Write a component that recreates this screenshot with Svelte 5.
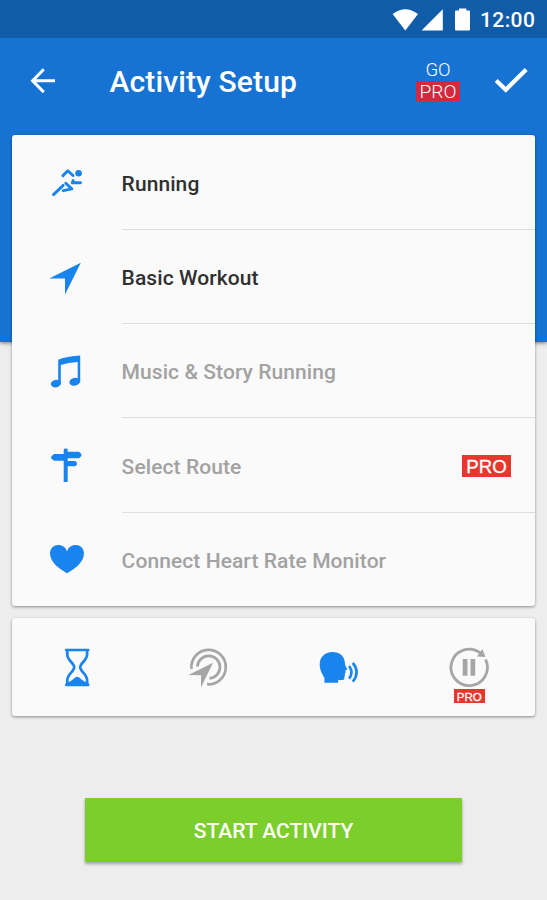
<script>
  const rows = [
    { icon: 'run', label: 'Running', on: true },
    { icon: 'nav', label: 'Basic Workout', on: true },
    { icon: 'music', label: 'Music & Story Running' },
    { icon: 'route', label: 'Select Route', pro: true },
    { icon: 'heart', label: 'Connect Heart Rate Monitor' }
  ];
</script>

<div class="screen">
  <header>
    <div class="status">
      <svg width="80" height="24" viewBox="392 8 80 24" fill="#fff">
        <path d="M392.6 14Q405.3 4.4 418 14L405.3 30.4Z" />
        <path d="M442.8 9.2V30.4H421.6Z" />
        <path d="M456 10.5H459V8.6H466.3V10.5H469Q470 10.5 470 11.5V29.4Q470 30.4 469 30.4H456Q455 30.4 455 29.4V11.5Q455 10.5 456 10.5Z" />
      </svg>
      <span class="time">12:00</span>
    </div>
    <div class="bar">
      <svg class="back" width="26" height="26" viewBox="0 0 26 26" fill="none" stroke="#fff" stroke-width="3">
        <path d="M13.8 1.3L2.6 12.7L13.8 24.1M2.6 12.7H25" />
      </svg>
      <h1>Activity Setup</h1>
      <div class="gopro"><span class="go">GO</span><span class="gp">PRO</span></div>
      <svg width="36" height="28" viewBox="493 66.6 36 28" fill="none" stroke="#fff" stroke-width="4.2">
        <path d="M496.2 80.1L505.8 89.3L526.2 69.2" />
      </svg>
    </div>
  </header>

  <main>
    <section class="card list">
      {#each rows as row}
        <div class="row">
          <div class="lead">
            {#if row.icon === 'run'}
              <svg width="40" height="40" viewBox="46 163 40 40" fill="none" stroke="#1a84ee" stroke-width="2.9" stroke-linecap="round" stroke-linejoin="round">
                <circle cx="78.6" cy="173.2" r="3.3" fill="#1a84ee" stroke="none" />
                <path d="M62.9 175.6L67.8 170.7L73 175.5M73.2 180.6L72.3 182.8H80.5M53.5 194.6L63.2 185.4M65.8 183.2L71.8 188.9L63.3 190.7" />
              </svg>
            {:else if row.icon === 'nav'}
              <svg width="40" height="40" viewBox="46 257.3 40 40" fill="#1a84ee">
                <path d="M80.8 263L65 294.8V278.7H49.2Z" />
              </svg>
            {:else if row.icon === 'music'}
              <svg width="40" height="40" viewBox="46 351.6 40 40" fill="#1a84ee">
                <path d="M58.2 359.3Q67 356 80.2 355.2V382H77.7V361.7Q68 362 60.8 364.6V384H58.2Z" />
                <ellipse cx="55.9" cy="383.2" rx="5.1" ry="3.8" transform="rotate(-14 55.9 383.2)" />
                <ellipse cx="74.7" cy="381.4" rx="5.4" ry="3.9" transform="rotate(-14 74.7 381.4)" />
              </svg>
            {:else if row.icon === 'route'}
              <svg width="40" height="40" viewBox="46 445.9 40 40" fill="#1a84ee">
                <path d="M63.7 482V460.7H54L51.2 458.4V456.4L54 454H63.7V449.5Q63.7 448.3 65.7 448.3T67.7 449.5V451.6H79L81.4 454V455.8L79 458.2H67.7V461H75.4L77 462.8V464.4L75.4 466.2H67.7V482Z" />
              </svg>
            {:else}
              <svg width="40" height="40" viewBox="46 540.2 40 40" fill="#1a84ee">
                <path d="M67 573.4C61 570.5 50 563 50 553.8C50 548.5 53.8 545.2 58.3 545.2C62.5 545.2 65.8 547.5 67 551.8C68.2 547.5 71.5 545.2 75.7 545.2C80.2 545.2 84 548.5 84 553.8C84 563 73 570.5 67 573.4Z" />
              </svg>
            {/if}
          </div>
          <div class="body" class:on={row.on}>
            <span class="label">{row.label}</span>
            {#if row.pro}<span class="pro">PRO</span>{/if}
          </div>
        </div>
      {/each}
    </section>

    <section class="card tools">
      <div class="tool">
        <svg width="48" height="60" viewBox="53 646 48 60" fill="none" stroke="#1a84ee" stroke-width="2.7">
          <path stroke-linecap="round" d="M66.2 650H88.2M66.2 684.8H88.2" />
          <path d="M67.3 650V654.5C67.3 660.5 74.2 663 74.2 667.3S67.3 674 67.3 680V685M87.1 650V654.5C87.1 660.5 80.2 663 80.2 667.3S87.1 674 87.1 680V685" />
          <path fill="#1a84ee" stroke="none" d="M68 685V682.6Q72 681 75.2 677.6Q77.2 676 79.2 677.6Q82.4 681 86.4 682.6V685Z" />
        </svg>
      </div>
      <div class="tool">
        <svg width="48" height="60" viewBox="183.8 646 48 60" fill="none" stroke="#a6a6a6" stroke-width="2.7">
          <path d="M191.3 669A17.2 17.2 0 1 1 206.8 684.2" />
          <path d="M197.2 666.6A11.3 11.3 0 1 1 209.3 678.4" />
          <path fill="#a6a6a6" stroke="none" d="M212.8 662.8L200.8 687.4V675.2L188.2 675Z" />
        </svg>
      </div>
      <div class="tool">
        <svg width="48" height="60" viewBox="314.6 646 48 60" fill="#1a84ee">
          <path d="M324 682.7V678C322 674 319.3 670.5 319.3 664.5C319.3 657 324.5 652.1 332 652.1C339.5 652.1 344.4 656.5 344.6 663.5C344.3 665.5 346.8 668 346.9 669.5L344.9 670.6L345.3 672.4L344.3 673.4L344.8 675L344 675.9C344.5 679.5 343 680.2 340.5 680L337.7 680.2V682.7Z" />
          <g fill="none" stroke="#1a84ee" stroke-width="2.6">
            <path d="M348.7 666Q353.6 672.2 348.7 678.6M352.4 662.9Q360 672.2 352.4 681.7" />
          </g>
        </svg>
      </div>
      <div class="tool">
        <svg width="48" height="60" viewBox="445.3 646 48 60" fill="#a6a6a6">
          <path fill="none" stroke="#a6a6a6" stroke-width="2.8" d="M485.8 659.3A18.2 18.2 0 1 1 480.5 652.9" />
          <path d="M482.7 648.9L485.8 657.1L477.2 656.4ZM463 659H467.8V675.8H463ZM470.8 659H475.5V675.8H470.8Z" />
        </svg>
        <span class="mini">PRO</span>
      </div>
    </section>

    <button>START ACTIVITY</button>
  </main>
</div>

<style>
  .screen {
    height: 900px;
    overflow: hidden;
    background: #ededed;
    font-family: Roboto, sans-serif;
  }
  header {
    height: 342px;
    background: #1673d3;
    box-shadow: 0 1px 4px rgba(0, 0, 0, 0.5);
  }
  .status {
    height: 38px;
    background: #115ca8;
    display: flex;
    align-items: center;
    justify-content: flex-end;
    gap: 8px;
    padding: 2px 11px 0 0;
    box-sizing: border-box;
    color: #fff;
  }
  .time {
    width: 56px;
    font-size: 21px;
    font-weight: 500;
    letter-spacing: 0.4px;
    white-space: nowrap;
  }
  .bar {
    height: 86px;
    display: flex;
    align-items: center;
    padding: 0 18px 0 30px;
  }
  h1 {
    flex: 1;
    margin: 2px 0 0 53.5px;
    font-size: 30px;
    line-height: 36px;
    font-weight: 500;
    letter-spacing: 0.13px;
    color: #fff;
    white-space: nowrap;
  }
  .gopro {
    display: flex;
    flex-direction: column;
    align-items: center;
    width: 44px;
    margin: 0 33px 2px 0;
    color: #fff;
    font-weight: 300;
  }
  .go {
    font-size: 18.5px;
    line-height: 21px;
    padding-top: 1px;
  }
  .gp {
    width: 44px;
    font-size: 19.2px;
    line-height: 21px;
    height: 20px;
    text-align: center;
    background: #d32840;
  }
  main {
    position: relative;
    margin-top: -207px;
    padding: 0 12px;
    display: flex;
    flex-direction: column;
  }
  .card {
    background: #fafafa;
    border-radius: 3px;
    box-shadow: 0 1px 3px rgba(0, 0, 0, 0.42);
  }
  .list {
    height: 471px;
    padding-top: 0.6px;
    box-sizing: border-box;
    display: flex;
    flex-direction: column;
  }
  .row {
    flex: none;
    height: 94.3px;
    display: flex;
  }
  .lead {
    width: 109.6px;
    padding: 27.4px 0 0 34px;
    box-sizing: border-box;
  }
  .body {
    flex: 1;
    display: flex;
    align-items: center;
    justify-content: space-between;
    padding-right: 24px;
    padding-top: 2px;
    border-bottom: 1.5px solid #dedede;
    box-sizing: border-box;
    font-size: 21px;
    font-weight: 500;
    letter-spacing: 0.08px;
    color: #a2a2a2;
    white-space: nowrap;
  }
  .label {
    padding-top: 1px;
  }
  .body.on {
    color: #303030;
  }
  .row:last-child .body {
    border-color: transparent;
  }
  .pro {
    width: 49px;
    height: 22px;
    text-align: center;
    font: 18.7px/23px 'Liberation Sans', sans-serif;
    -webkit-text-stroke: 0.3px #fff;
    color: #fff;
    background: #e6372d;
  }
  .tools {
    height: 98px;
    margin-top: 12px;
    display: flex;
  }
  .tool {
    position: relative;
    width: 130.8px;
    padding: 28px 0 0 41px;
    box-sizing: border-box;
  }
  .mini {
    position: absolute;
    left: 49.5px;
    top: 71px;
    width: 31px;
    height: 14px;
    font: 11.6px/15px 'Liberation Sans', sans-serif;
    -webkit-text-stroke: 0.3px #fff;
    text-align: center;
    color: #fff;
    background: #e6372d;
  }
  button {
    align-self: center;
    width: 377px;
    height: 64px;
    margin-top: 82px;
    padding: 2px 0 0;
    border: 0;
    background: #7bce2b;
    color: #fff;
    font: 500 21px Roboto, sans-serif;
    box-shadow: 0 2px 3px rgba(0, 0, 0, 0.32);
  }
</style>
